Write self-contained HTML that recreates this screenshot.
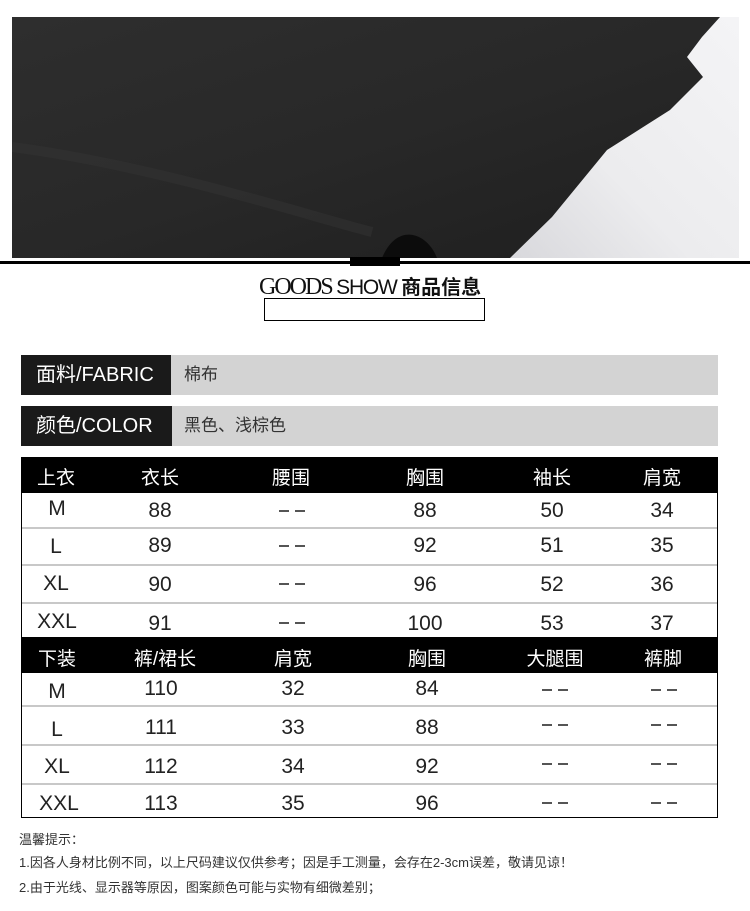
<!DOCTYPE html>
<html><head><meta charset="utf-8"><style>
*{margin:0;padding:0;box-sizing:border-box}
body{width:750px;height:911px;background:#fff;position:relative;font-family:"Liberation Sans","Noto Sans CJK SC",sans-serif;overflow:hidden}
.abs{position:absolute}
.c{position:absolute;transform:translateX(-50%);font-size:21px;color:#222;white-space:nowrap}
.d{position:absolute;transform:translateX(-50%);width:26px;height:2px;display:flex;justify-content:space-between}
.d::before,.d::after{content:"";width:10px;height:1.5px;background:#555}
.h .c{color:#fff;font-size:19px}
</style></head><body>
<svg class="abs" style="left:12px;top:17px" width="727" height="241" viewBox="0 0 727 241">
<defs><linearGradient id="g" x1="0" y1="0" x2="1" y2="1"><stop offset="0" stop-color="#2e2e2e"/><stop offset="0.5" stop-color="#282828"/><stop offset="1" stop-color="#1e1e1e"/></linearGradient>
<linearGradient id="l" x1="0" y1="1" x2="1" y2="0"><stop offset="0" stop-color="#d8d8dc"/><stop offset="0.4" stop-color="#ececee"/><stop offset="1" stop-color="#f4f4f6"/></linearGradient></defs>
<rect width="727" height="241" fill="url(#g)"/>
<polygon points="708,0 727,0 727,241 498,241 540,200 595,133 658,93 691,60 675,40 690,20" fill="url(#l)"/>
<path d="M370,241 C385,205 415,215 425,241 Z" fill="#0c0c0c"/>
<path d="M0,130 C150,150 300,200 360,215" stroke="#333" stroke-width="10" fill="none" opacity=".5"/>
</svg>
<div class="abs" style="left:0;top:261px;width:750px;height:3px;background:#000"></div>
<div class="abs" style="left:350px;top:257px;width:50px;height:9px;background:#000"></div>
<div class="abs" style="left:259px;top:271px;white-space:nowrap;color:#111"><span style="font-family:'Liberation Serif',serif;font-size:24px;letter-spacing:-2px">GOODS</span> <span style="font-size:21px;letter-spacing:-1.2px">SHOW</span> <b style="font-family:'Noto Sans CJK SC',sans-serif;font-size:20px">商品信息</b></div>
<div class="abs" style="left:264px;top:298px;width:221px;height:23px;border:1.5px solid #000"></div>

<div class="abs" style="left:21px;top:355px;width:697px;height:40px;background:#d3d3d3"></div>
<div class="abs" style="left:21px;top:355px;width:150px;height:40px;background:#1a1a1a;color:#fff;font-size:20px;line-height:40px;padding-left:15px">面料/FABRIC</div>
<div class="abs" style="left:184px;top:355px;line-height:40px;font-size:17px;color:#333">棉布</div>
<div class="abs" style="left:21px;top:406px;width:697px;height:40px;background:#d3d3d3"></div>
<div class="abs" style="left:21px;top:406px;width:151px;height:40px;background:#1a1a1a;color:#fff;font-size:20px;line-height:40px;padding-left:15px">颜色/COLOR</div>
<div class="abs" style="left:184px;top:406px;line-height:40px;font-size:17px;color:#333">黑色、浅棕色</div>

<div class="abs" style="left:21px;top:457px;width:697px;height:361px;border:1px solid #000"></div>
<div class="abs" style="left:21px;top:457px;width:697px;height:36px;background:#000"></div>
<div class="abs" style="left:21px;top:637px;width:697px;height:36px;background:#000"></div>
<div class="abs" style="left:22px;top:527px;width:695px;height:2px;background:#c8c8c8"></div>
<div class="abs" style="left:22px;top:564px;width:695px;height:2px;background:#c8c8c8"></div>
<div class="abs" style="left:22px;top:602px;width:695px;height:2px;background:#c8c8c8"></div>
<div class="abs" style="left:22px;top:705px;width:695px;height:2px;background:#c8c8c8"></div>
<div class="abs" style="left:22px;top:744px;width:695px;height:2px;background:#c8c8c8"></div>
<div class="abs" style="left:22px;top:783px;width:695px;height:2px;background:#c8c8c8"></div>

<div class="h">
<div class="c" style="left:56px;top:463px">上衣</div><div class="c" style="left:160px;top:463px">衣长</div><div class="c" style="left:291px;top:463px">腰围</div><div class="c" style="left:425px;top:463px">胸围</div><div class="c" style="left:552px;top:463px">袖长</div><div class="c" style="left:662px;top:463px">肩宽</div>
<div class="c" style="left:57px;top:644px">下装</div><div class="c" style="left:165px;top:644px">裤/裙长</div><div class="c" style="left:293px;top:644px">肩宽</div><div class="c" style="left:427px;top:644px">胸围</div><div class="c" style="left:555px;top:644px">大腿围</div><div class="c" style="left:663px;top:644px">裤脚</div>
</div>

<div class="c" style="left:57px;top:497px">M</div><div class="c" style="left:160px;top:499px">88</div><div class="d" style="left:292px;top:510px"></div><div class="c" style="left:425px;top:499px">88</div><div class="c" style="left:552px;top:499px">50</div><div class="c" style="left:662px;top:499px">34</div>
<div class="c" style="left:56px;top:535px">L</div><div class="c" style="left:160px;top:534px">89</div><div class="d" style="left:292px;top:545px"></div><div class="c" style="left:425px;top:534px">92</div><div class="c" style="left:552px;top:534px">51</div><div class="c" style="left:662px;top:534px">35</div>
<div class="c" style="left:56px;top:572px">XL</div><div class="c" style="left:160px;top:573px">90</div><div class="d" style="left:292px;top:583px"></div><div class="c" style="left:425px;top:573px">96</div><div class="c" style="left:552px;top:573px">52</div><div class="c" style="left:662px;top:573px">36</div>
<div class="c" style="left:57px;top:610px">XXL</div><div class="c" style="left:160px;top:612px">91</div><div class="d" style="left:292px;top:622px"></div><div class="c" style="left:425px;top:612px">100</div><div class="c" style="left:552px;top:612px">53</div><div class="c" style="left:662px;top:612px">37</div>

<div class="c" style="left:57px;top:680px">M</div><div class="c" style="left:161px;top:677px">110</div><div class="c" style="left:293px;top:677px">32</div><div class="c" style="left:427px;top:677px">84</div><div class="d" style="left:555px;top:689px"></div><div class="d" style="left:664px;top:689px"></div>
<div class="c" style="left:57px;top:718px">L</div><div class="c" style="left:161px;top:716px">111</div><div class="c" style="left:293px;top:716px">33</div><div class="c" style="left:427px;top:716px">88</div><div class="d" style="left:555px;top:724px"></div><div class="d" style="left:664px;top:724px"></div>
<div class="c" style="left:57px;top:755px">XL</div><div class="c" style="left:161px;top:755px">112</div><div class="c" style="left:293px;top:755px">34</div><div class="c" style="left:427px;top:755px">92</div><div class="d" style="left:555px;top:763px"></div><div class="d" style="left:664px;top:763px"></div>
<div class="c" style="left:59px;top:792px">XXL</div><div class="c" style="left:161px;top:792px">113</div><div class="c" style="left:293px;top:792px">35</div><div class="c" style="left:427px;top:792px">96</div><div class="d" style="left:555px;top:802px"></div><div class="d" style="left:664px;top:802px"></div>

<div class="abs" style="left:19px;top:829px;font-size:13px;color:#333">温馨提示：</div>
<div class="abs" style="left:19px;top:852px;font-size:13px;color:#333;white-space:nowrap">1.因各人身材比例不同，以上尺码建议仅供参考；因是手工测量，会存在2-3cm误差，敬请见谅！</div>
<div class="abs" style="left:19px;top:877px;font-size:13px;color:#333;white-space:nowrap">2.由于光线、显示器等原因，图案颜色可能与实物有细微差别；</div>
</body></html>
